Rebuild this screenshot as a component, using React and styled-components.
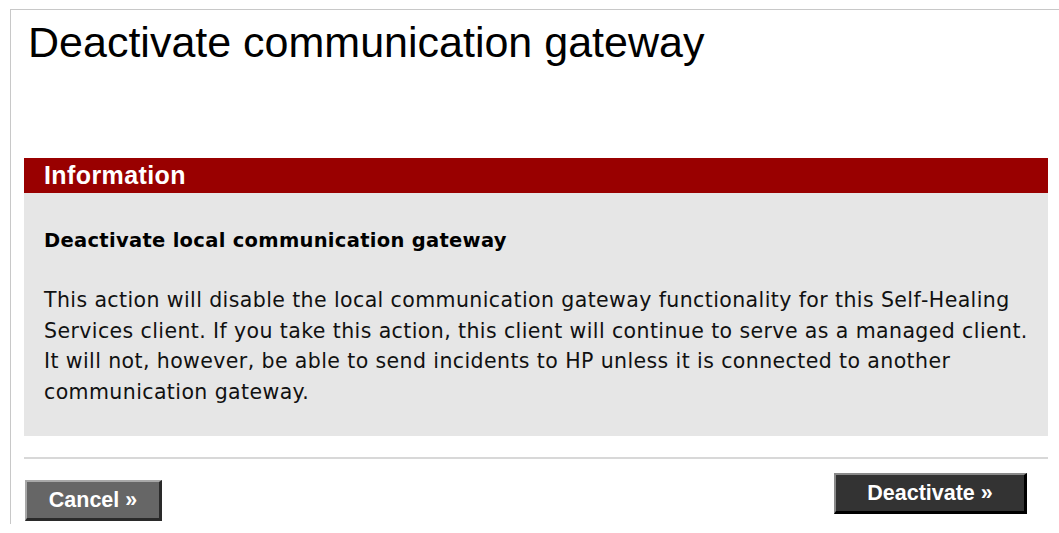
import React from "react";
import styled, { createGlobalStyle } from "styled-components";

const GlobalStyle = createGlobalStyle`
  html, body {
    margin: 0;
    padding: 0;
    background: #ffffff;
  }
  body {
    font-family: "Liberation Sans", Arial, sans-serif;
    color: #000000;
  }
`;

const App = () => {
  return (
    <>
      <GlobalStyle />
      <Page>
        <Frame>
          <Title>Deactivate communication gateway</Title>
          <Section>
            <SectionHeader>Information</SectionHeader>
            <SectionBody>
              <Subheading>Deactivate local communication gateway</Subheading>
              <Paragraph>
                This action will disable the local communication gateway
                functionality for this Self&#8209;Healing
                <br />
                Services client. If you take this action, this client will
                continue to serve as a managed client.
                <br />
                It will not, however, be able to send incidents to HP unless it
                is connected to another
                <br />
                communication gateway.
              </Paragraph>
            </SectionBody>
          </Section>
          <Divider />
          <Actions>
            <Button tone="cancel">Cancel »</Button>
            <Button tone="primary">Deactivate »</Button>
          </Actions>
        </Frame>
      </Page>
    </>
  );
};

const Page = styled.div`
  padding: 9px 0 0 10px;
  height: 524px;
  box-sizing: border-box;
`;

const Frame = styled.div`
  height: 100%;
  box-sizing: border-box;
  border-top: 1px solid #c8c8c8;
  border-left: 1px solid #c8c8c8;
  padding: 11px 11px 0 13px;
`;

const Title = styled.h1`
  margin: 0 0 0 4px;
  font-size: 43px;
  line-height: 42px;
  font-weight: normal;
  color: #000000;
`;

const Section = styled.div`
  margin-top: 95px;
`;

const SectionHeader = styled.div`
  background: #990000;
  color: #ffffff;
  font-weight: bold;
  font-size: 25px;
  line-height: 35px;
  height: 35px;
  padding-left: 20px;
  letter-spacing: 0.4px;
`;

const SectionBody = styled.div`
  background: #e6e6e6;
  padding: 36px 6px 29px 20px;
`;

const Subheading = styled.div`
  font-family: "DejaVu Sans", Verdana, sans-serif;
  font-weight: bold;
  font-size: 19.5px;
  letter-spacing: 0.3px;
  line-height: 24px;
  color: #000000;
`;

const Paragraph = styled.p`
  margin: 32px 0 0 0;
  font-family: "DejaVu Sans", Verdana, sans-serif;
  font-size: 20.5px;
  letter-spacing: 0.4px;
  line-height: 30.5px;
  color: #111111;
`;

const Divider = styled.div`
  margin-top: 21px;
  height: 2px;
  background: #d8d8d8;
`;

const Actions = styled.div`
  display: flex;
  justify-content: space-between;
  align-items: flex-start;
  margin-top: 14px;
  padding-right: 21px;
`;

const Button = styled.button`
  font-family: "Liberation Sans", Arial, sans-serif;
  font-weight: bold;
  font-size: 21.5px;
  color: #ffffff;
  height: 41px;
  padding: 0;
  cursor: pointer;
  border-style: solid;
  border-width: 2px 3px 3px 2px;
  text-align: center;
  background: ${(p) => (p.tone === "primary" ? "#333333" : "#666666")};
  border-color: ${(p) =>
    p.tone === "primary"
      ? "#8a8a8a #000000 #000000 #8a8a8a"
      : "#a8a8a8 #2a2a2a #2a2a2a #a8a8a8"};
  width: ${(p) => (p.tone === "primary" ? "193px" : "137px")};
  margin-top: ${(p) => (p.tone === "primary" ? "0" : "7px")};
  margin-left: ${(p) => (p.tone === "primary" ? "0" : "1px")};
`;

export default App;
